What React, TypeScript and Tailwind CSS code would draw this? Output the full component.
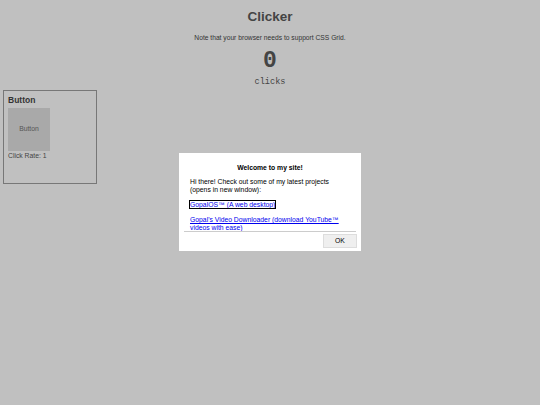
export default function App() {
  return (
    <div className="relative h-[405px] w-[540px] overflow-hidden bg-[#c0c0c0] font-['Liberation_Sans',Arial,sans-serif] text-[#333]">
      <div className="flex flex-col items-center pt-[8px]">
        <h1 className="text-[13.5px] font-bold leading-[17px] text-[#444]">Clicker</h1>
        <p className="mt-[8px] text-[6.7px] leading-[9px] text-[#333]">
          Note that your browser needs to support CSS Grid.
        </p>
        <div className="mt-[6px] font-['Liberation_Mono',monospace] text-[23px] font-bold leading-[27px] text-[#444]">
          0
        </div>
        <div className="mt-[2px] font-['Liberation_Mono',monospace] text-[8.6px] leading-[11px] text-[#444]">
          clicks
        </div>
      </div>

      <div className="ml-[3px] mt-[2px] h-[94px] w-[94px] border border-[#777] px-[4px] pt-[3px]">
        <div className="text-[8.5px] font-bold leading-[12px] text-[#333]">Button</div>
        <div className="mt-[2px] flex h-[43px] w-[42px] items-center justify-center bg-[#a9a9a9] text-[6.8px] text-[#555]">
          Button
        </div>
        <div className="text-[6.8px] leading-[9px] text-[#444]">Click Rate: 1</div>
      </div>

      <div className="absolute left-[179px] top-[153px] flex h-[98px] w-[182px] flex-col bg-white text-black">
        <div className="mx-[5px] h-[79px] overflow-hidden border-b border-[#ccc] pl-[6px] pr-[16px] pt-[10px]">
          <div className="pl-[10px] text-center text-[6.8px] font-bold leading-[9px]">Welcome to my site!</div>
          <p className="mt-[6px] text-[6.8px] leading-[8px]">
            Hi there! Check out some of my latest projects (opens in new window):
          </p>
          <p className="mt-[7px] text-[6.8px] leading-[8px]">
            <a href="#" className="text-[#0000ee] underline outline outline-1 outline-black">
              GopalOS™ (A web desktop)
            </a>
          </p>
          <p className="mt-[7px] text-[6.8px] leading-[8px]">
            <a href="#" className="text-[#0000ee] underline">
              Gopal's Video Downloader (download YouTube™ videos with ease)
            </a>
          </p>
        </div>
        <div className="flex justify-end pr-[4px] pt-[2px]">
          <button className="h-[14px] w-[34px] border border-[#ddd] bg-[#efefef] text-[6.8px] leading-[12px] text-black">
            OK
          </button>
        </div>
      </div>
    </div>
  );
}
